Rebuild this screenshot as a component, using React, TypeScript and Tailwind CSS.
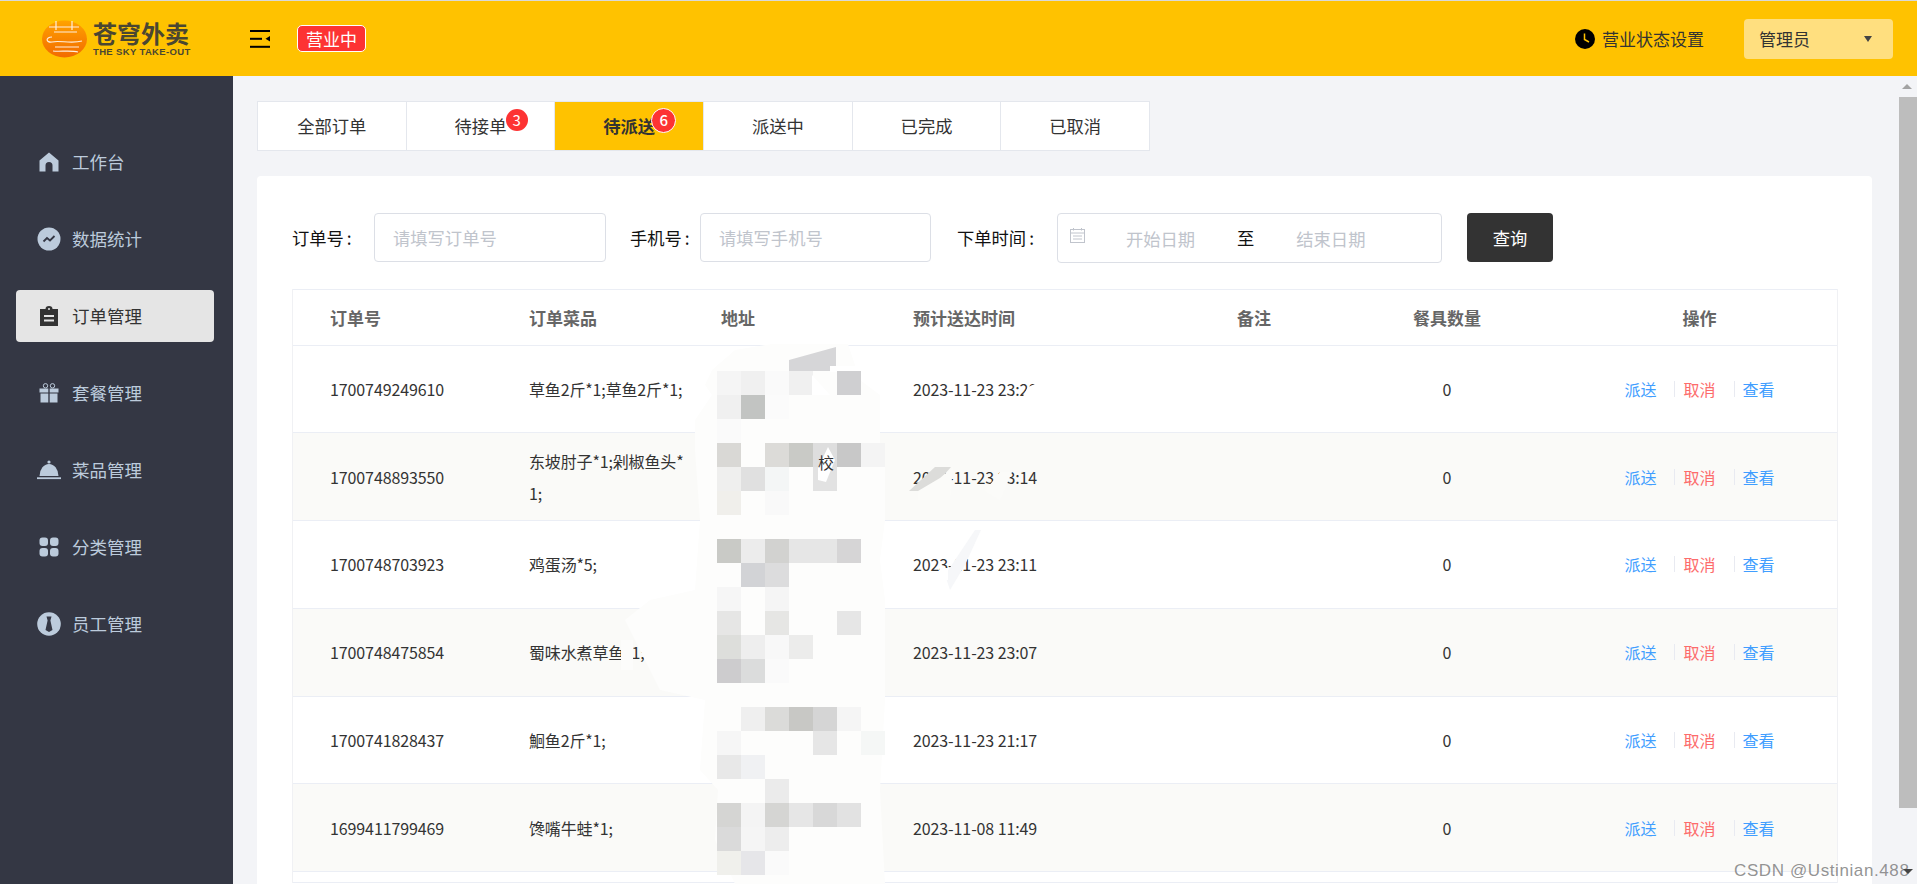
const font = { fontFamily: '"Noto Sans CJK SC", "Noto Sans", sans-serif' };

function HomeIcon() {
  return (
    <svg width="20" height="20" viewBox="0 0 20 20" fill="currentColor">
      <path d="M10 0.5 L19.5 8.5 V19.5 H13.5 V13.5 A3.5 3.5 0 0 0 6.5 13.5 V19.5 H0.5 V8.5 Z" />
    </svg>
  );
}

function StatsIcon() {
  return (
    <svg width="24" height="24" viewBox="0 0 24 24">
      <circle cx="12" cy="12" r="11.5" fill="currentColor" />
      <path d="M6.5 14.5 L10 11 L13 13.5 L17.5 9" fill="none" stroke="#343744" strokeWidth="1.8" />
    </svg>
  );
}

function ClipboardIcon() {
  return (
    <svg width="20" height="20" viewBox="0 0 20 20" fill="currentColor">
      <path fillRule="evenodd" d="M1 3 H6.5 A3.5 3 0 0 1 13.5 3 H19 V20 H1 Z M5 9 V11 H15 V9 Z M5 13.5 V15.5 H15 V13.5 Z M9 3 A1 1 0 0 0 11 3 A1 1 0 0 0 9 3 Z" />
    </svg>
  );
}

function GiftIcon() {
  return (
    <svg width="20" height="20" viewBox="0 0 20 20" fill="currentColor">
      <circle cx="6.5" cy="2.8" r="2.2" fill="none" stroke="currentColor" />
      <circle cx="13.5" cy="2.8" r="2.2" fill="none" stroke="currentColor" />
      <path d="M0.5 5.5 H9.3 V9.5 H0.5 Z M10.7 5.5 H19.5 V9.5 H10.7 Z M1.5 10.5 H9.3 V19.5 H1.5 Z M10.7 10.5 H18.5 V19.5 H10.7 Z" />
    </svg>
  );
}

function ClocheIcon() {
  return (
    <svg width="24" height="20" viewBox="0 0 24 20" fill="currentColor">
      <circle cx="12" cy="2" r="1.6" />
      <path d="M2.5 16 A9.5 12 0 0 1 21.5 16 Z" />
      <rect x="0" y="17.3" width="24" height="1.8" />
    </svg>
  );
}

function GridIcon() {
  return (
    <svg width="20" height="20" viewBox="0 0 20 20" fill="currentColor">
      <rect x="0.5" y="0.5" width="8.5" height="8.5" rx="3" />
      <rect x="11" y="0.5" width="8.5" height="8.5" rx="3" />
      <rect x="0.5" y="11" width="8.5" height="8.5" rx="3" />
      <rect x="11" y="11" width="8.5" height="8.5" rx="3" />
    </svg>
  );
}

function TieIcon() {
  return (
    <svg width="24" height="24" viewBox="0 0 24 24">
      <circle cx="12" cy="12" r="11.8" fill="currentColor" />
      <path d="M9.5 4.5 H14.5 L13.4 8.5 L15.5 18 L12 20 L8.5 18 L10.6 8.5 Z" fill="#343744" />
    </svg>
  );
}

function MenuFoldIcon() {
  return (
    <svg width="20" height="18" viewBox="0 0 20 18" fill="#000">
      <rect x="0" y="0" width="20" height="2" />
      <rect x="0" y="7.8" width="12" height="2" />
      <rect x="0" y="15.8" width="20" height="2" />
      <path d="M20 6 V11.5 L15.5 8.8 Z" />
    </svg>
  );
}

function ClockIcon() {
  return (
    <svg width="20" height="20" viewBox="0 0 20 20">
      <circle cx="10" cy="10" r="10" fill="#000" />
      <path d="M9.5 4.5 V10.5 L14 13" fill="none" stroke="#ffc200" strokeWidth="1.5" />
    </svg>
  );
}

function CalendarIcon() {
  return (
    <svg width="15" height="15" viewBox="0 0 15 15" fill="none" stroke="#c0c4cc" strokeWidth="1">
      <rect x="0.5" y="1.5" width="14" height="13" />
      <path d="M0.5 5 H14.5 M3.5 0 V2.5 M11.5 0 V2.5 M3 8 H12 M3 11 H12" />
    </svg>
  );
}

function Logo() {
  return (
    <div className="flex items-center gap-[5px]">
      <svg width="47" height="38" viewBox="0 0 47 38">
        <defs>
          <linearGradient id="logoFill" x1="0" y1="0" x2="0" y2="1">
            <stop offset="0" stopColor="#ffa200" />
            <stop offset="1" stopColor="#f26a00" />
          </linearGradient>
        </defs>
        <ellipse cx="23.5" cy="19" rx="22.5" ry="18.5" fill="url(#logoFill)" />
        <path
          d="M8 7 H38 M15 1 V10 M31 1 V10 M13 12 H36 M11 17 C4 17 5 23 11 22 C18 20 30 24 41 21 M14 27 H38 M12 31 C18 32 30 30 37 32"
          fill="none"
          stroke="#ffeedd"
          strokeWidth="1.2"
        />
      </svg>
      <div className="flex flex-col">
        <div className="h-[26px] text-[24px] leading-[26px] font-bold text-[#4a4632]">苍穹外卖</div>
        <div className="h-[11px] text-[9.5px] leading-[11px] font-bold text-[#4a4632] tracking-[0.35px] [font-family:'Liberation_Sans',sans-serif]">
          THE SKY TAKE-OUT
        </div>
      </div>
    </div>
  );
}

const menu = [
  { label: "工作台", icon: <HomeIcon /> },
  { label: "数据统计", icon: <StatsIcon /> },
  { label: "订单管理", icon: <ClipboardIcon />, active: true },
  { label: "套餐管理", icon: <GiftIcon /> },
  { label: "菜品管理", icon: <ClocheIcon /> },
  { label: "分类管理", icon: <GridIcon /> },
  { label: "员工管理", icon: <TieIcon /> },
];

const tabs = [
  { label: "全部订单" },
  { label: "待接单", badge: "3" },
  { label: "待派送", badge: "6", active: true },
  { label: "派送中" },
  { label: "已完成" },
  { label: "已取消" },
];

const orders = [
  { id: "1700749249610", dishes: "草鱼2斤*1;草鱼2斤*1;", time: "2023-11-23 23:20" },
  { id: "1700748893550", dishes: "东坡肘子*1;剁椒鱼头*1;", time: "2023-11-23 23:14" },
  { id: "1700748703923", dishes: "鸡蛋汤*5;", time: "2023-11-23 23:11" },
  { id: "1700748475854", dishes: "蜀味水煮草鱼*1;", time: "2023-11-23 23:07" },
  { id: "1700741828437", dishes: "鮰鱼2斤*1;", time: "2023-11-23 21:17" },
  { id: "1699411799469", dishes: "馋嘴牛蛙*1;", time: "2023-11-08 11:49" },
];

// [top, column, colour] blocks of the mosaic over the address column
const mosaic: [number, number, string][] = [
  [371, 0, "#f5f5f5"], [371, 1, "#f0f0f0"], [371, 2, "#fafafa"], [371, 3, "#f0f0f0"], [371, 5, "#cfcfd1"],
  [395, 0, "#f0f0f0"], [395, 1, "#c2c4c2"], [395, 2, "#fbfbfb"],
  [419, 0, "#fafafa"],
  [443, 0, "#d9d8d5"], [443, 2, "#dcdbd8"], [443, 3, "#c9cac6"], [443, 4, "#dedede"], [443, 5, "#c8c8c8"], [443, 6, "#f4f4f4"],
  [467, 0, "#efefee"], [467, 1, "#e0e0e0"], [467, 2, "#f4f6f6"], [467, 4, "#e2e2e2"],
  [491, 0, "#f0efeb"], [491, 2, "#f9f9f9"],
  [539, 0, "#c9cac6"], [539, 1, "#ececec"], [539, 2, "#d2d2d0"], [539, 3, "#e6e6e6"], [539, 4, "#e6e6e6"], [539, 5, "#d6d5d6"],
  [563, 1, "#d2d3d6"], [563, 2, "#dcdcdd"],
  [587, 0, "#f6f6f6"], [587, 2, "#f5f5f5"],
  [611, 0, "#e6e6e5"], [611, 2, "#e6e6e4"], [611, 5, "#e6e6e6"],
  [635, 0, "#dddedb"], [635, 1, "#eeeeee"], [635, 2, "#f8f8f8"], [635, 3, "#ececeb"],
  [659, 0, "#cdccce"], [659, 1, "#dbdcdc"], [659, 2, "#fafafa"],
  [707, 1, "#efefef"], [707, 2, "#dbdbd9"], [707, 3, "#c8c8c5"], [707, 4, "#d5d5d5"], [707, 5, "#f5f5f5"],
  [731, 0, "#f6f6f6"], [731, 4, "#e6e6e6"], [731, 6, "#f5f7f6"],
  [755, 0, "#e8e8e8"], [755, 1, "#f0f1f3"],
  [779, 2, "#ebebeb"],
  [803, 0, "#d5d5d3"], [803, 1, "#f4f4f4"], [803, 2, "#d5d5d3"], [803, 3, "#e6e6e6"], [803, 4, "#d8d8d8"], [803, 5, "#e2e2e2"],
  [827, 0, "#dadada"], [827, 1, "#f5f5f5"], [827, 2, "#ededed"],
  [851, 0, "#f0f0ec"], [851, 1, "#e6e6e9"], [851, 2, "#fafafa"],
];

// the redaction smear laid over the address and part of the time column
function Redaction() {
  return (
    <svg className="absolute left-0 top-0 pointer-events-none" width="1917" height="884" viewBox="0 0 1917 884">
      <path
        d="M772 344 H848 L860 380 L880 395 L880 444 H885 V520 L880 560 L885 600 V700 L880 790 L885 884 H735 L715 840 L718 790 L700 770 L705 700 L660 690 L625 620 L650 600 L695 590 L700 520 L695 450 L695 420 L712 395 L705 385 L712 370 L735 350 Z"
        fill="#fdfdfc"
      />
      <path d="M789 371 L789 360 L836 347 V371 L812 371 L836 371 Z" fill="#d6d6d8" />
      <path d="M830 366 L860 366 L870 372 L830 372 Z" fill="#fff" />
      {mosaic.map(([top, col, color]) => (
        <rect key={`${top}-${col}`} x={717 + col * 24} y={top} width="24" height="24" fill={color} />
      ))}
      <path d="M818 468 L828 447 L835 460 L826 482 L818 480 Z" fill="#fff" />
      <path d="M812 375 L830 395 L812 395 Z" fill="#fff" />
      <path d="M1028 387 L1050 378 V402 H1020 Z" fill="#fff" />
      <path d="M909 491 L935 467 H951 L930 491 Z" fill="#dcdcda" />
      <path d="M918 491 L940 478 L953 467 L950 500 L918 500 Z" fill="#fbfbf9" />
      <path d="M985 491 L1000 472 H1012 L1000 500 Z" fill="#fbfbf9" />
      <path d="M945 575 L975 530 L981 530 L965 565 L950 590 Z" fill="#f6f7f9" />
      <path d="M940 568 H948 V580 H940 Z" fill="#fff" />
      <path d="M621 640 H633 V670 H621 Z" fill="#fcfcfb" />
    </svg>
  );
}

function Scrollbar() {
  return (
    <div className="w-[20px] bg-[#f3f4f7] flex flex-col items-end">
      <div className="h-[21px] w-full flex items-center justify-center">
        <div className="w-0 h-0 border-x-[5px] border-x-transparent border-b-[5px] border-b-[#a3a3a3]" />
      </div>
      <div className="w-[18px] h-[711px] bg-[#bdbdbd]" />
    </div>
  );
}

export default function App() {
  return (
    <div className="relative w-[1917px] h-[884px] overflow-hidden flex flex-col bg-[#f3f4f7]" style={font}>
      {/* Header */}
      <div className="h-[76px] bg-[#ffc200] border-t border-[#d9d9d9] flex items-center shrink-0">
        <div className="w-[250px] pl-[41px] shrink-0">
          <Logo />
        </div>
        <MenuFoldIcon />
        <div className="ml-[27px] h-[27px] px-[8px] rounded-[5px] bg-[#fd3333] border border-white text-white text-[17px] leading-[25px]">
          营业中
        </div>
        <div className="ml-auto flex items-center text-[#333] text-[17px]">
          <ClockIcon />
          <span className="ml-[7px]">营业状态设置</span>
          <div className="ml-[40px] mr-[24px] w-[149px] h-[40px] rounded-[4px] bg-[#ffdf7f] pl-[15px] pr-[21px] flex items-center justify-between">
            <span>管理员</span>
            <div className="w-0 h-0 border-x-[4px] border-x-transparent border-t-[6px] border-t-[#444]" />
          </div>
        </div>
      </div>

      <div className="flex-1 flex min-h-0">
        {/* Sidebar */}
        <div className="w-[233px] shrink-0 bg-[#343744] pt-[60px] px-[16px] flex flex-col gap-[25px]">
          {menu.map((m) => (
            <div
              key={m.label}
              className={
                m.active
                  ? "h-[52px] w-[198px] rounded-[4px] bg-[#e5e5e5] text-[#333] flex items-center text-[17.5px]"
                  : "h-[52px] w-[198px] rounded-[4px] text-[#bccbdc] flex items-center text-[17.5px]"
              }
            >
              <div className="w-[56px] flex justify-center shrink-0 pl-[13px] pr-[3px]">{m.icon}</div>
              <span>{m.label}</span>
            </div>
          ))}
        </div>

        {/* Main */}
        <div className="flex-1 min-w-0 pl-[24px] pr-[25px] pt-[25px] flex flex-col gap-[25px]">
          <div className="flex w-[893px] h-[50px] border-y border-r border-[#e4e7ed] bg-white shrink-0">
            {tabs.map((t) => (
              <div
                key={t.label}
                className={
                  t.active
                    ? "relative flex-1 flex items-center justify-center border-l border-[#e4e7ed] bg-[#ffc200] text-[17.3px] font-bold text-[#333]"
                    : "relative flex-1 flex items-center justify-center border-l border-[#e4e7ed] text-[17.3px] text-[#333]"
                }
              >
                {t.label}
                {t.badge && (
                  <span
                    className={
                      t.active
                        ? "absolute left-[96px] top-[6px] w-[25px] h-[25px] rounded-full bg-[#fd3333] border border-white text-white text-[15px] font-medium leading-[22px] text-center"
                        : "absolute left-[99px] top-[7px] w-[22px] h-[22px] rounded-full bg-[#fd3333] text-white text-[15px] leading-[22px] text-center"
                    }
                  >
                    {t.badge}
                  </span>
                )}
              </div>
            ))}
          </div>

          <div className="flex-1 bg-white rounded-t-[4px] px-[35px] pt-[37px] min-h-0">
            {/* Filters */}
            <div className="flex items-center h-[49px] text-[17.3px] text-[#111]">
              <span className="w-[82px]">
                订单号<span className="ml-[3px]">:</span>
              </span>
              <input
                placeholder="请填写订单号"
                className="w-[232px] h-[49px] rounded-[4px] border border-[#dcdfe6] pl-[18px] outline-none placeholder:text-[#c0c4cc]"
              />
              <span className="ml-[24px] w-[70px]">
                手机号<span className="ml-[3px]">:</span>
              </span>
              <input
                placeholder="请填写手机号"
                className="w-[231px] h-[49px] rounded-[4px] border border-[#dcdfe6] pl-[18px] outline-none placeholder:text-[#c0c4cc]"
              />
              <span className="ml-[26px] w-[100px]">
                下单时间<span className="ml-[3px]">:</span>
              </span>
              <div className="w-[385px] h-[50px] rounded-[4px] border border-[#dcdfe6] flex items-center text-[#c0c4cc]">
                <div className="ml-[12px] -mt-[4px]">
                  <CalendarIcon />
                </div>
                <span className="ml-[41px] w-[111px] mt-[3px]">开始日期</span>
                <span className="text-[#111] mt-[1px]">至</span>
                <span className="ml-[42px] mt-[3px]">结束日期</span>
              </div>
              <div className="ml-[25px] w-[86px] h-[49px] rounded-[4px] bg-[#333] text-white flex items-center justify-center">
                查询
              </div>
            </div>

            {/* Table */}
            <div className="mt-[27px] w-[1546px] border-x border-[#f0f1f4]">
              <div className="grid grid-cols-[216px_192px_192px_324px_117px_226px_279px] h-[56.5px] items-center border-y border-[#ebeef5] text-[17px] font-bold text-[#666]">
                <div className="pl-[37px]">订单号</div>
                <div className="pl-[20px]">订单菜品</div>
                <div className="pl-[20px]">地址</div>
                <div className="pl-[20px]">预计送达时间</div>
                <div className="pl-[20px]">备注</div>
                <div className="text-center">餐具数量</div>
                <div className="text-center">操作</div>
              </div>
              {orders.map((o, i) => (
                <div
                  key={o.id}
                  className={
                    i % 2 === 1
                      ? "grid grid-cols-[216px_192px_192px_324px_117px_226px_279px] h-[87.8px] items-center border-b border-[#ebeef5] text-[16px] text-[#333] bg-[#fafaf8]"
                      : "grid grid-cols-[216px_192px_192px_324px_117px_226px_279px] h-[87.8px] items-center border-b border-[#ebeef5] text-[16px] text-[#333]"
                  }
                >
                  <div className="pl-[37px] tracking-[-0.1px]">{o.id}</div>
                  <div className="pl-[20px] pr-[12px] leading-[32px] break-all tracking-[-0.15px]">{o.dishes}</div>
                  <div />
                  <div className="pl-[20px] tracking-[-0.1px]">{o.time}</div>
                  <div />
                  <div className="text-center">0</div>
                  <div className="flex items-center justify-center">
                    <span className="text-[#419eff]">派送</span>
                    <span className="ml-[18px] mr-[8px] w-px h-[16px] bg-[#e8eaf1]" />
                    <span className="text-[#fd6b6b]">取消</span>
                    <span className="ml-[18px] mr-[8px] w-px h-[16px] bg-[#e8eaf1]" />
                    <span className="text-[#419eff]">查看</span>
                  </div>
                </div>
              ))}
              <div className="h-[11px] border-b border-[#ebeef5]" />
            </div>
          </div>
        </div>

        <Scrollbar />
      </div>

      <Redaction />
      <div className="absolute left-[818px] top-[450px] text-[16px] text-[#333]">校</div>
      <div className="absolute left-[1734px] top-[858px] text-[17px] text-[#777]/80 tracking-[0.6px] [font-family:'Liberation_Sans',sans-serif]">
        CSDN @Ustinian.488
      </div>
      <div className="absolute left-[1903px] top-[869px] w-0 h-0 border-x-[5px] border-x-transparent border-t-[5px] border-t-[#444]" />
    </div>
  );
}
